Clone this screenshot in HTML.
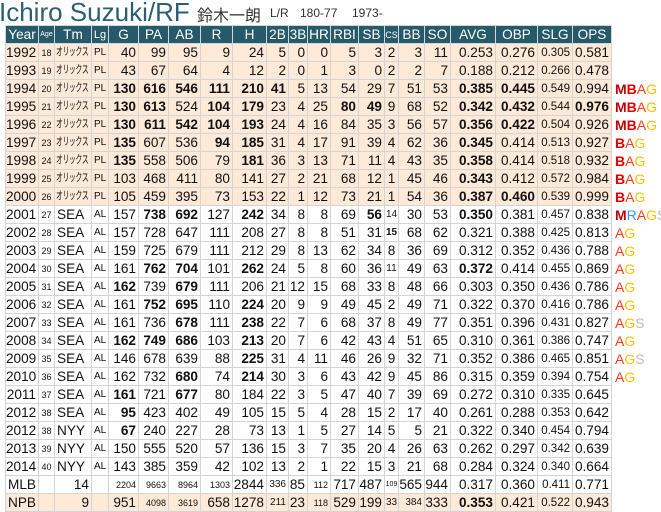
<!DOCTYPE html>
<html><head><meta charset="utf-8">
<style>
body{margin:0;background:#fff;font-family:"Liberation Sans","Noto Sans CJK JP",sans-serif;width:661px;height:511px;overflow:hidden;position:relative}
.t{position:absolute;left:-1px;top:-3px;font-size:26px;color:#2b5f73;white-space:nowrap}
.j{position:absolute;left:197px;top:2px;font-size:16px;color:#333}
.m{position:absolute;top:6px;font-size:12px;color:#333}
table{position:absolute;left:5px;top:25px;border-collapse:collapse;table-layout:fixed;width:647px}
tr{height:18px}
td,th{height:17px;max-height:17px;padding:0 2px 0 0;border:1px solid #d4d4d4;font-size:13.6px;text-align:right;white-space:nowrap;overflow:hidden;color:#111;line-height:16px;box-sizing:border-box}
th{background:#265a6a;color:#fff;font-weight:normal;text-align:center;padding:0;border:1px solid #cfd8dc}
tr.o td{background:#fde9d7}
td.a{font-size:9px;text-align:center;padding:0}
td.l{font-size:10px;text-align:left;padding-left:2px}
td.tm{text-align:left;padding-left:2px}
td.k{text-align:left;padding-left:1px}
td.k span{display:inline-block;font-size:11px;line-height:11px;height:11px;vertical-align:middle;transform:scaleX(0.62);transform-origin:0 50%;letter-spacing:-0.5px}
td.s{font-size:11.5px}
td.c{text-align:center;padding:0}
td.x{font-size:9px}
b{font-weight:bold}
td.w{border:none;background:#fff !important;text-align:left;padding-left:3px;font-size:14px;overflow:visible}
.M{color:#c00000;font-weight:bold}.B{color:#e00000;font-weight:bold}.A{color:#ff3a1a}.G{color:#ffc000}.R{color:#3399ff}.S{color:#bbb}
</style></head><body>
<div class="t">Ichiro Suzuki/RF</div>
<div class="j">鈴木一朗</div>
<div class="m" style="left:270px">L/R</div>
<div class="m" style="left:300px">180-77</div>
<div class="m" style="left:352px">1973-</div>
<table>
<colgroup><col style="width:33px"><col style="width:16px"><col style="width:37px"><col style="width:17px"><col style="width:30px"><col style="width:30px"><col style="width:32px"><col style="width:32px"><col style="width:34px"><col style="width:22px"><col style="width:19px"><col style="width:23px"><col style="width:28px"><col style="width:26px"><col style="width:14px"><col style="width:26px"><col style="width:26px"><col style="width:45px"><col style="width:42px"><col style="width:35px"><col style="width:39px"><col style="width:41px"></colgroup>
<tr><th>Year</th><th style="font-size:7px">Age</th><th>Tm</th><th style="font-size:11px">Lg</th><th>G</th><th>PA</th><th>AB</th><th>R</th><th>H</th><th>2B</th><th>3B</th><th>HR</th><th>RBI</th><th>SB</th><th style="font-size:9px">CS</th><th>BB</th><th>SO</th><th>AVG</th><th>OBP</th><th>SLG</th><th>OPS</th><td class="w"></td></tr>
<tr class="o"><td>1992</td><td class="a">18</td><td class="k"><span>オリックス</span></td><td class="l">PL</td><td>40</td><td>99</td><td>95</td><td>9</td><td>24</td><td>5</td><td>0</td><td>0</td><td>5</td><td>3</td><td class="c">2</td><td>3</td><td>11</td><td>0.253</td><td>0.276</td><td class="s">0.305</td><td>0.581</td><td class="w"></td></tr>
<tr class="o"><td>1993</td><td class="a">19</td><td class="k"><span>オリックス</span></td><td class="l">PL</td><td>43</td><td>67</td><td>64</td><td>4</td><td>12</td><td>2</td><td>0</td><td>1</td><td>3</td><td>0</td><td class="c">2</td><td>2</td><td>7</td><td>0.188</td><td>0.212</td><td class="s">0.266</td><td>0.478</td><td class="w"></td></tr>
<tr class="o"><td>1994</td><td class="a">20</td><td class="k"><span>オリックス</span></td><td class="l">PL</td><td><b>130</b></td><td><b>616</b></td><td><b>546</b></td><td><b>111</b></td><td><b>210</b></td><td><b>41</b></td><td>5</td><td>13</td><td>54</td><td>29</td><td class="c">7</td><td>51</td><td>53</td><td><b>0.385</b></td><td><b>0.445</b></td><td class="s">0.549</td><td>0.994</td><td class="w"><span class="M">M</span><span class="B">B</span><span class="A">A</span><span class="G">G</span></td></tr>
<tr class="o"><td>1995</td><td class="a">21</td><td class="k"><span>オリックス</span></td><td class="l">PL</td><td><b>130</b></td><td><b>613</b></td><td>524</td><td><b>104</b></td><td><b>179</b></td><td>23</td><td>4</td><td>25</td><td><b>80</b></td><td><b>49</b></td><td class="c">9</td><td>68</td><td>52</td><td><b>0.342</b></td><td><b>0.432</b></td><td class="s">0.544</td><td><b>0.976</b></td><td class="w"><span class="M">M</span><span class="B">B</span><span class="A">A</span><span class="G">G</span></td></tr>
<tr class="o"><td>1996</td><td class="a">22</td><td class="k"><span>オリックス</span></td><td class="l">PL</td><td><b>130</b></td><td><b>611</b></td><td><b>542</b></td><td><b>104</b></td><td><b>193</b></td><td>24</td><td>4</td><td>16</td><td>84</td><td>35</td><td class="c">3</td><td>56</td><td>57</td><td><b>0.356</b></td><td><b>0.422</b></td><td class="s">0.504</td><td>0.926</td><td class="w"><span class="M">M</span><span class="B">B</span><span class="A">A</span><span class="G">G</span></td></tr>
<tr class="o"><td>1997</td><td class="a">23</td><td class="k"><span>オリックス</span></td><td class="l">PL</td><td><b>135</b></td><td>607</td><td>536</td><td><b>94</b></td><td><b>185</b></td><td>31</td><td>4</td><td>17</td><td>91</td><td>39</td><td class="c">4</td><td>62</td><td>36</td><td><b>0.345</b></td><td>0.414</td><td class="s">0.513</td><td>0.927</td><td class="w"><span class="B">B</span><span class="A">A</span><span class="G">G</span></td></tr>
<tr class="o"><td>1998</td><td class="a">24</td><td class="k"><span>オリックス</span></td><td class="l">PL</td><td><b>135</b></td><td>558</td><td>506</td><td>79</td><td><b>181</b></td><td>36</td><td>3</td><td>13</td><td>71</td><td>11</td><td class="c">4</td><td>43</td><td>35</td><td><b>0.358</b></td><td>0.414</td><td class="s">0.518</td><td>0.932</td><td class="w"><span class="B">B</span><span class="A">A</span><span class="G">G</span></td></tr>
<tr class="o"><td>1999</td><td class="a">25</td><td class="k"><span>オリックス</span></td><td class="l">PL</td><td>103</td><td>468</td><td>411</td><td>80</td><td>141</td><td>27</td><td>2</td><td>21</td><td>68</td><td>12</td><td class="c">1</td><td>45</td><td>46</td><td><b>0.343</b></td><td>0.412</td><td class="s">0.572</td><td>0.984</td><td class="w"><span class="B">B</span><span class="A">A</span><span class="G">G</span></td></tr>
<tr class="o"><td>2000</td><td class="a">26</td><td class="k"><span>オリックス</span></td><td class="l">PL</td><td>105</td><td>459</td><td>395</td><td>73</td><td>153</td><td>22</td><td>1</td><td>12</td><td>73</td><td>21</td><td class="c">1</td><td>54</td><td>36</td><td><b>0.387</b></td><td><b>0.460</b></td><td class="s">0.539</td><td>0.999</td><td class="w"><span class="B">B</span><span class="A">A</span><span class="G">G</span></td></tr>
<tr><td>2001</td><td class="a">27</td><td class="tm">SEA</td><td class="l">AL</td><td>157</td><td><b>738</b></td><td><b>692</b></td><td>127</td><td><b>242</b></td><td>34</td><td>8</td><td>8</td><td>69</td><td><b>56</b></td><td class="c" style="font-size:10px">14</td><td>30</td><td>53</td><td><b>0.350</b></td><td>0.381</td><td class="s">0.457</td><td>0.838</td><td class="w"><span class="M">M</span><span class="R">R</span><span class="A">A</span><span class="G">G</span><span class="S">S</span></td></tr>
<tr><td>2002</td><td class="a">28</td><td class="tm">SEA</td><td class="l">AL</td><td>157</td><td>728</td><td>647</td><td>111</td><td>208</td><td>27</td><td>8</td><td>8</td><td>51</td><td>31</td><td class="c" style="font-size:10px"><b>15</b></td><td>68</td><td>62</td><td>0.321</td><td>0.388</td><td class="s">0.425</td><td>0.813</td><td class="w"><span class="A">A</span><span class="G">G</span></td></tr>
<tr><td>2003</td><td class="a">29</td><td class="tm">SEA</td><td class="l">AL</td><td>159</td><td>725</td><td>679</td><td>111</td><td>212</td><td>29</td><td>8</td><td>13</td><td>62</td><td>34</td><td class="c">8</td><td>36</td><td>69</td><td>0.312</td><td>0.352</td><td class="s">0.436</td><td>0.788</td><td class="w"><span class="A">A</span><span class="G">G</span></td></tr>
<tr><td>2004</td><td class="a">30</td><td class="tm">SEA</td><td class="l">AL</td><td>161</td><td><b>762</b></td><td><b>704</b></td><td>101</td><td><b>262</b></td><td>24</td><td>5</td><td>8</td><td>60</td><td>36</td><td class="c" style="font-size:10px">11</td><td>49</td><td>63</td><td><b>0.372</b></td><td>0.414</td><td class="s">0.455</td><td>0.869</td><td class="w"><span class="A">A</span><span class="G">G</span></td></tr>
<tr><td>2005</td><td class="a">31</td><td class="tm">SEA</td><td class="l">AL</td><td><b>162</b></td><td>739</td><td><b>679</b></td><td>111</td><td>206</td><td>21</td><td>12</td><td>15</td><td>68</td><td>33</td><td class="c">8</td><td>48</td><td>66</td><td>0.303</td><td>0.350</td><td class="s">0.436</td><td>0.786</td><td class="w"><span class="A">A</span><span class="G">G</span></td></tr>
<tr><td>2006</td><td class="a">32</td><td class="tm">SEA</td><td class="l">AL</td><td>161</td><td><b>752</b></td><td><b>695</b></td><td>110</td><td><b>224</b></td><td>20</td><td>9</td><td>9</td><td>49</td><td>45</td><td class="c">2</td><td>49</td><td>71</td><td>0.322</td><td>0.370</td><td class="s">0.416</td><td>0.786</td><td class="w"><span class="A">A</span><span class="G">G</span></td></tr>
<tr><td>2007</td><td class="a">33</td><td class="tm">SEA</td><td class="l">AL</td><td>161</td><td>736</td><td><b>678</b></td><td>111</td><td><b>238</b></td><td>22</td><td>7</td><td>6</td><td>68</td><td>37</td><td class="c">8</td><td>49</td><td>77</td><td>0.351</td><td>0.396</td><td class="s">0.431</td><td>0.827</td><td class="w"><span class="A">A</span><span class="G">G</span><span class="S">S</span></td></tr>
<tr><td>2008</td><td class="a">34</td><td class="tm">SEA</td><td class="l">AL</td><td><b>162</b></td><td><b>749</b></td><td><b>686</b></td><td>103</td><td><b>213</b></td><td>20</td><td>7</td><td>6</td><td>42</td><td>43</td><td class="c">4</td><td>51</td><td>65</td><td>0.310</td><td>0.361</td><td class="s">0.386</td><td>0.747</td><td class="w"><span class="A">A</span><span class="G">G</span></td></tr>
<tr><td>2009</td><td class="a">35</td><td class="tm">SEA</td><td class="l">AL</td><td>146</td><td>678</td><td>639</td><td>88</td><td><b>225</b></td><td>31</td><td>4</td><td>11</td><td>46</td><td>26</td><td class="c">9</td><td>32</td><td>71</td><td>0.352</td><td>0.386</td><td class="s">0.465</td><td>0.851</td><td class="w"><span class="A">A</span><span class="G">G</span><span class="S">S</span></td></tr>
<tr><td>2010</td><td class="a">36</td><td class="tm">SEA</td><td class="l">AL</td><td>162</td><td>732</td><td><b>680</b></td><td>74</td><td><b>214</b></td><td>30</td><td>3</td><td>6</td><td>43</td><td>42</td><td class="c">9</td><td>45</td><td>86</td><td>0.315</td><td>0.359</td><td class="s">0.394</td><td>0.754</td><td class="w"><span class="A">A</span><span class="G">G</span></td></tr>
<tr><td>2011</td><td class="a">37</td><td class="tm">SEA</td><td class="l">AL</td><td><b>161</b></td><td>721</td><td><b>677</b></td><td>80</td><td>184</td><td>22</td><td>3</td><td>5</td><td>47</td><td>40</td><td class="c">7</td><td>39</td><td>69</td><td>0.272</td><td>0.310</td><td class="s">0.335</td><td>0.645</td><td class="w"></td></tr>
<tr><td>2012</td><td class="a">38</td><td class="tm">SEA</td><td class="l">AL</td><td><b>95</b></td><td>423</td><td>402</td><td>49</td><td>105</td><td>15</td><td>5</td><td>4</td><td>28</td><td>15</td><td class="c">2</td><td>17</td><td>40</td><td>0.261</td><td>0.288</td><td class="s">0.353</td><td>0.642</td><td class="w"></td></tr>
<tr><td>2012</td><td class="a">38</td><td class="tm">NYY</td><td class="l">AL</td><td><b>67</b></td><td>240</td><td>227</td><td>28</td><td>73</td><td>13</td><td>1</td><td>5</td><td>27</td><td>14</td><td class="c">5</td><td>5</td><td>21</td><td>0.322</td><td>0.340</td><td class="s">0.454</td><td>0.794</td><td class="w"></td></tr>
<tr><td>2013</td><td class="a">39</td><td class="tm">NYY</td><td class="l">AL</td><td>150</td><td>555</td><td>520</td><td>57</td><td>136</td><td>15</td><td>3</td><td>7</td><td>35</td><td>20</td><td class="c">4</td><td>26</td><td>63</td><td>0.262</td><td>0.297</td><td class="s">0.342</td><td>0.639</td><td class="w"></td></tr>
<tr><td>2014</td><td class="a">40</td><td class="tm">NYY</td><td class="l">AL</td><td>143</td><td>385</td><td>359</td><td>42</td><td>102</td><td>13</td><td>2</td><td>1</td><td>22</td><td>15</td><td class="c">3</td><td>21</td><td>68</td><td>0.284</td><td>0.324</td><td class="s">0.340</td><td>0.664</td><td class="w"></td></tr>
<tr><td style="text-align:left;padding-left:2px">MLB</td><td></td><td>14</td><td></td><td class="x">2204</td><td class="x">9663</td><td class="x">8964</td><td class="x">1303</td><td>2844</td><td class="x" style="font-size:10px">336</td><td>85</td><td class="x">112</td><td>717</td><td>487</td><td class="c" style="font-size:7px">109</td><td>565</td><td>944</td><td>0.317</td><td>0.360</td><td class="s">0.411</td><td>0.771</td><td class="w"></td></tr>
<tr class="o"><td style="text-align:left;padding-left:2px">NPB</td><td></td><td>9</td><td></td><td>951</td><td class="x">4098</td><td class="x">3619</td><td>658</td><td>1278</td><td class="x" style="font-size:10px">211</td><td>23</td><td class="x">118</td><td>529</td><td>199</td><td class="c" style="font-size:10px">33</td><td class="x" style="font-size:10px">384</td><td>333</td><td><b>0.353</b></td><td>0.421</td><td class="s">0.522</td><td>0.943</td><td class="w"></td></tr>
</table>
</body></html>
